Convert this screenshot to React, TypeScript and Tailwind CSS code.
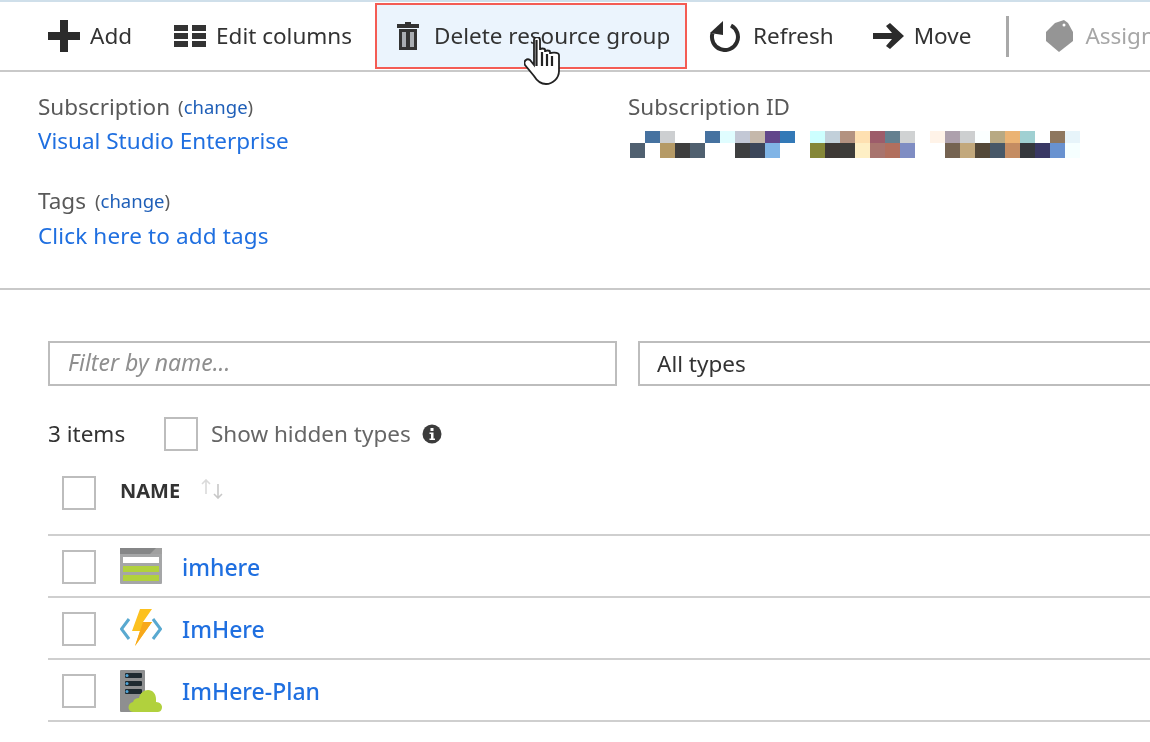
import React from "react";

const FONT = "font-['Noto_Sans','Open_Sans',sans-serif]";

// blurred subscription id, two rows of 15px cells
const mosaicTop = ["", "#4672a0", "#cdcfd1", "", "", "#4672a0", "#e0fdff", "#c3c8d5", "#c5b8ab", "#61468a", "#3379b7", "", "#cdffff", "#c2d0da", "#b39280", "#fee0b1", "#9d5c6a", "#648090", "#d0d2d3", "", "#fff3e8", "#ada0ac", "#cdcfd0", "#fbffff", "#b8a983", "#ebb373", "#a0d0d2", "", "#8e775f", "#e7f4fa"];
const mosaicBottom = ["#506070", "", "#b59a66", "#3e3e3e", "#50606f", "", "", "#3e3f40", "#3c465a", "#80b4e6", "", "", "#858738", "#3e3935", "#3e3d3a", "#feefc5", "#a8746e", "#b16f5e", "#7f8dc3", "", "", "#756351", "#c2a87c", "#534838", "#475868", "#c48c62", "#35383d", "#393864", "#6892d0", "#f6ffff"];

function PlusIcon() {
  return (
    <svg width="34" height="34" viewBox="0 0 34 34" className="shrink-0">
      <path d="M13 1h8v12h12v8H21v12h-8V21H1v-8h12z" fill="#2b2b2b" />
    </svg>
  );
}

function ColumnsIcon() {
  return (
    <svg width="34" height="24" viewBox="0 0 34 24" className="shrink-0">
      <path d="M1 1h14v6H1zM19 1h14v6H19zM1 9h14v6H1zM19 9h14v6H19zM1 17h14v6H1zM19 17h14v6H19z" fill="#333" />
    </svg>
  );
}

function TrashIcon() {
  return (
    <svg width="22" height="28" viewBox="0 0 22 28" className="shrink-0">
      <path d="M8 0h6v2h8v4H0V2h8z" fill="#333" />
      <rect x="3" y="8" width="16" height="18" fill="#a9adb2" />
      <path d="M2 7h18v21H2zM5 10v15h4V10zM13 10v15h4V10z" fill="#333" fillRule="evenodd" />
    </svg>
  );
}

function RefreshIcon() {
  return (
    <svg width="32" height="32" viewBox="0 0 32 32" className="shrink-0">
      <path d="M22 5.500A13 13 0 1 1 3.500 13.300" fill="none" stroke="#2b2b2b" strokeWidth="4" />
      <path d="M14 1v14L1 13z" fill="#2b2b2b" />
    </svg>
  );
}

function ArrowIcon() {
  return (
    <svg width="32" height="26" viewBox="0 0 32 26" className="shrink-0">
      <path d="M1 10h19l-6-7 4-3 14 13-14 13-4-3 6-7H1z" fill="#2b2b2b" />
    </svg>
  );
}

function TagIcon() {
  return (
    <svg width="28" height="32" viewBox="0 0 28 32" className="shrink-0">
      <path d="M10 3l9-3 4 3 5 9v9L14 32 1 21v-9z" fill="#959595" />
      <circle cx="19" cy="5" r="1.500" fill="#fff" />
    </svg>
  );
}

function HandCursor() {
  return (
    <svg width="36" height="48" viewBox="0 0 36 48" className="absolute left-[524px] top-[37px]">
      <path
        d="M10 3c0-4 6-4 6 0v10c0-2 5-2 5 0v2c0-2 5-2 5 0v2c0-2 9-2 9 1v16c0 7-6 13-13 13-5 0-9-3-12-8L1 28c-2-4 2-7 5-5l4 5z"
        fill="#fff"
        stroke="#222"
        strokeWidth="1.800"
      />
      <path d="M12.500 3v26M18 15v14M23 17v12M28 19v10" stroke="#222" strokeWidth="2.200" fill="none" />
    </svg>
  );
}

function InfoIcon() {
  return (
    <svg width="20" height="20" viewBox="0 0 20 20" className="shrink-0">
      <circle cx="10" cy="10" r="9.500" fill="#3c3c3c" />
      <path d="M8.500 4h3v3h-3zM7.500 8.500h4v6h1.500V16H7.500v-1.500H9v-4.500H7.500z" fill="#fff" />
    </svg>
  );
}

function SortIcon() {
  return (
    <svg width="26" height="20" viewBox="0 0 26 20" className="shrink-0">
      <path d="M7 15V1M3 5l4-4 4 4" fill="none" stroke="#dadada" strokeWidth="1.600" />
      <path d="M19 5v14M15 15l4 4 4-4" fill="none" stroke="#c8c8c8" strokeWidth="1.600" />
    </svg>
  );
}

function StorageIcon() {
  return (
    <svg width="42" height="36" viewBox="0 0 42 36" className="-mt-[3px]">
      <rect width="42" height="36" rx="1" fill="#a5a6a7" />
      <rect width="42" height="6" fill="#858687" />
      <path d="M36 0h6v6h-12z" fill="#a0a0a0" />
      <rect x="3" y="9" width="36" height="6" fill="#fff" />
      <rect x="3" y="18" width="36" height="6" fill="#b1d13d" />
      <rect x="3" y="27" width="36" height="6" fill="#b1d13d" />
    </svg>
  );
}

function FunctionIcon() {
  return (
    <svg width="42" height="38" viewBox="0 0 42 38" className="-mt-[2px]">
      <path d="M9 10L1.500 20 9 30M33 10l7.500 10L33 30" fill="none" stroke="#59a9d0" strokeWidth="3" />
      <path d="M20 0h12l-9 13h9L15 37l5-15h-8z" fill="#fcc11f" />
      <path d="M23 13h9L15 37l5-15z" fill="#f7a81b" />
    </svg>
  );
}

function PlanIcon() {
  return (
    <svg width="42" height="42" viewBox="0 0 42 42">
      <rect width="25" height="42" rx="1" fill="#8e8f90" />
      <rect x="5" y="3" width="17" height="5" rx="1" fill="#1f2a30" />
      <rect x="5" y="11" width="17" height="5" rx="1" fill="#1f2a30" />
      <rect x="5" y="19" width="17" height="5" rx="1" fill="#1f2a30" />
      <circle cx="7" cy="5.500" r="1.500" fill="#4fa5d8" />
      <circle cx="7" cy="13.500" r="1.500" fill="#4fa5d8" />
      <circle cx="7" cy="21.500" r="1.500" fill="#4fa5d8" />
      <path d="M13 42c-6 0-6-9 0-10 1-3 3-4 6-4 1-5 5-8 9-8 5 0 8 4 8 9v3c4 0 6 3 6 5s-1 5-4 5z" fill="#b1d13d" />
    </svg>
  );
}

function Checkbox() {
  return <div className="size-[34px] shrink-0 border-2 border-[#bdbdbd] bg-white" />;
}

function ToolButton({ icon, label, active, muted, className }: { icon: React.ReactNode; label: string; active?: boolean; muted?: boolean; className?: string }) {
  return (
    <div className={`flex h-[66px] shrink-0 items-center whitespace-nowrap ${active ? "border-2 border-[#f45c54] bg-[#ebf4fd]" : ""} ${className ?? ""}`}>
      {icon}
      <span className={`text-[22.5px] leading-none ${muted ? "text-[#a6a6a6]" : "text-[#333]"}`}>{label}</span>
    </div>
  );
}

function ResourceRow({ icon, name }: { icon: React.ReactNode; name: string }) {
  return (
    <div className="flex h-[62px] items-center border-b-2 border-[#cfcfcf] pl-[14px] pt-[2px]">
      <Checkbox />
      <div className="ml-6 flex w-[42px] justify-center">{icon}</div>
      <span className="ml-5 text-[23px] font-medium leading-none text-[#1f6fe0]">{name}</span>
    </div>
  );
}

export default function App() {
  return (
    <div className={`relative h-[742px] w-[1150px] overflow-hidden bg-white blur-[0.4px] ${FONT}`}>
      <div className="h-[2px] bg-[#cfdfea]" />

      {/* toolbar */}
      <div className="flex h-[70px] items-start overflow-hidden border-b-2 border-[#c9c9c9] pl-[47px] pt-px">
        <ToolButton icon={<PlusIcon />} label="Add" className="gap-[9px]" />
        <ToolButton icon={<ColumnsIcon />} label="Edit columns" className="ml-[41px] gap-[9px]" />
        <ToolButton icon={<TrashIcon />} label="Delete resource group" active className="ml-[23px] w-[312px] gap-[15px] pl-[20px]" />
        <ToolButton icon={<RefreshIcon />} label="Refresh" className="ml-[22px] gap-[12px]" />
        <ToolButton icon={<ArrowIcon />} label="Move" className="ml-[38px] gap-[10px]" />
        <div className="ml-[35px] mt-[13px] h-[41px] w-[3px] shrink-0 bg-[#a9a9a9]" />
        <ToolButton icon={<TagIcon />} label="Assign tags" muted className="ml-[36px] gap-[12px]" />
      </div>

      {/* essentials */}
      <div className="flex h-[218px] border-b-2 border-[#c9c9c9] pl-[38px] pt-[18px]">
        <div className="w-[590px]">
          <div className="flex h-[34px] items-center text-[22.5px] leading-none text-[#595959]">
            Subscription
            <span className="ml-[8px] text-[18.5px] text-[#595959]">
              (<span className="text-[#1f5fb8]">change</span>)
            </span>
          </div>
          <div className="flex h-[34px] items-center text-[22.5px] leading-none text-[#1f6fe0]">Visual Studio Enterprise</div>
          <div className="mt-[26px] flex h-[34px] items-center text-[22.5px] leading-none text-[#595959]">
            Tags
            <span className="ml-[9px] text-[18.5px] text-[#595959]">
              (<span className="text-[#1f5fb8]">change</span>)
            </span>
          </div>
          <div className="mt-px flex h-[34px] items-center text-[22.5px] leading-none tracking-[0.14px] text-[#1f6fe0]">Click here to add tags</div>
        </div>
        <div>
          <div className="flex h-[34px] items-center text-[22.5px] leading-none text-[#595959]">Subscription ID</div>
          <div className="mt-[4px] ml-[2px] flex h-[15px]">
            {mosaicTop.map((c, i) => (
              <div key={i} className="h-[12px] w-[15px] self-end" style={{ backgroundColor: c || undefined }} />
            ))}
          </div>
          <div className="ml-[2px] flex h-[15px]">
            {mosaicBottom.map((c, i) => (
              <div key={i} className="h-[15px] w-[15px]" style={{ backgroundColor: c || undefined }} />
            ))}
          </div>
        </div>
      </div>

      {/* filters */}
      <div className="flex gap-[21px] pl-[48px] pt-[51px]">
        <div className="flex h-[45px] w-[569px] shrink-0 items-center border-2 border-[#bdbdbd] pb-[3px] pl-[18px] text-[23px] italic leading-none text-[#8f8f8f]">Filter by name...</div>
        <div className="flex h-[45px] w-[600px] shrink-0 items-center border-2 border-[#bdbdbd] pl-[17px] pt-px text-[22.5px] leading-none text-[#333]">All types</div>
      </div>

      <div className="mt-[31px] flex h-[34px] items-center pl-[48px]">
        <span className="w-[116px] text-[22.5px] leading-none text-[#333]">3 items</span>
        <Checkbox />
        <span className="ml-[13px] text-[22.5px] leading-none text-[#666]">Show hidden types</span>
        <span className="ml-[11px]">
          <InfoIcon />
        </span>
      </div>

      {/* table */}
      <div className="ml-[48px] mt-[15px]">
        <div className="flex h-[70px] items-start border-b-2 border-[#cfcfcf] pl-[14px] pt-[10px]">
          <Checkbox />
          <span className="ml-6 mt-[5px] text-[20px] font-bold leading-[20px] text-[#333]">NAME</span>
          <span className="ml-[19px] mt-[3px]">
            <SortIcon />
          </span>
        </div>
        <ResourceRow icon={<StorageIcon />} name="imhere" />
        <ResourceRow icon={<FunctionIcon />} name="ImHere" />
        <ResourceRow icon={<PlanIcon />} name="ImHere-Plan" />
      </div>

      <HandCursor />
    </div>
  );
}
